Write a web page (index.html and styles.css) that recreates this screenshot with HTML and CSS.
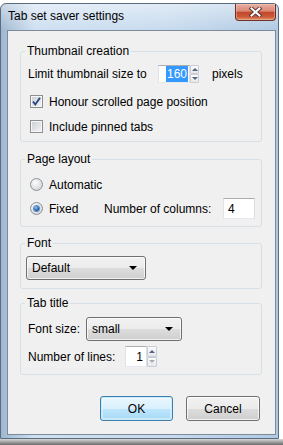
FILE: index.html
```html
<!DOCTYPE html>
<html lang="en">
<head>
  <meta charset="UTF-8">
  <title>Tab set saver settings</title>
  <link rel="stylesheet" href="styles.css">
</head>
<body>
  <div class="window">
    <div class="titlebar">
      <span class="title">Tab set saver settings</span>
      <span class="close">
        <svg width="13" height="10" viewBox="0 0 13 10">
          <path d="M2.5 1.5 L10.5 8.5 M10.5 1.5 L2.5 8.5" stroke="#5a3a36" stroke-width="4" stroke-linecap="square"/>
          <path d="M2.5 1.5 L10.5 8.5 M10.5 1.5 L2.5 8.5" stroke="#fff" stroke-width="2" stroke-linecap="square"/>
        </svg>
      </span>
    </div>

    <div class="client">
      <fieldset class="group thumb">
        <legend>Thumbnail creation</legend>
        <div class="row limit">
          <span class="limit-label">Limit thumbnail size to</span>
          <span class="spin">
            <span class="field size-field"><span class="selected">160</span></span>
            <span class="arrows">
              <span class="up"></span>
              <span class="down"></span>
            </span>
          </span>
          <span class="pixels">pixels</span>
        </div>
        <label class="row check-row honour">
          <span class="box">
            <svg width="11" height="11" viewBox="0 0 11 11">
              <path d="M2 5.5 L4.3 8.5 L9 1.8" fill="none" stroke="#2b4587" stroke-width="1.9"/>
            </svg>
          </span>
          Honour scrolled page position
        </label>
        <label class="row check-row pinned">
          <span class="box"></span>
          Include pinned tabs
        </label>
      </fieldset>

      <fieldset class="group layout">
        <legend>Page layout</legend>
        <label class="row check-row automatic">
          <span class="radio"></span>
          Automatic
        </label>
        <div class="row fixed">
          <span class="radio on"></span>
          <span class="fixed-label">Fixed</span>
          <span class="columns-label">Number of columns:</span>
          <span class="field columns-field">4</span>
        </div>
      </fieldset>

      <fieldset class="group font">
        <legend>Font</legend>
        <div class="combo font-combo">Default</div>
      </fieldset>

      <fieldset class="group tabtitle">
        <legend>Tab title</legend>
        <div class="row size-row">
          <span class="size-label">Font size:</span>
          <div class="combo size-combo">small</div>
        </div>
        <div class="row lines-row">
          <span class="lines-label">Number of lines:</span>
          <span class="spin small-spin">
            <span class="field lines-field">1</span>
            <span class="arrows">
              <span class="up"></span>
              <span class="down off"></span>
            </span>
          </span>
        </div>
      </fieldset>

      <div class="buttons">
        <span class="btn default">OK</span>
        <span class="btn cancel">Cancel</span>
      </div>
    </div>
  </div>
  <div class="under"></div>
</body>
</html>
```

FILE: styles.css
```css
* {
  box-sizing: border-box;
}
html, body {
  margin: 0;
  padding: 0;
}
body {
  width: 283px;
  height: 445px;
  overflow: hidden;
  background: #fff;
  font-family: "Liberation Sans", Arial, sans-serif;
  font-size: 12px;
  color: #000;
}
.window {
  margin-top: 3px;
  width: 279px;
  height: 436px;
  display: flex;
  flex-direction: column;
  border: 1px solid #5a6d80;
  border-radius: 6px 6px 0 0;
  background:
    linear-gradient(rgba(255,255,255,0.45), rgba(255,255,255,0) 26px),
    linear-gradient(to right, #9fb8d1, #cfe0f1 12%, #c8dbee 60%, #b0c9e3);
}
.titlebar {
  height: 26px;
  display: flex;
  justify-content: space-between;
  align-items: flex-start;
}
.title {
  padding: 5px 0 0 7px;
  line-height: 15px;
}
.close {
  width: 41px;
  height: 17px;
  margin-right: 2px;
  display: flex;
  align-items: center;
  justify-content: center;
  border: 1px solid #6d3026;
  border-top: none;
  border-radius: 0 0 4px 4px;
  background: linear-gradient(#eab0a3, #d98672 45%, #c4452c 52%, #cc5a38 80%, #e0936a);
  box-shadow: inset 0 0 0 1px rgba(255,220,210,0.35);
}
.client {
  flex: 1;
  margin: 0 2px 3px 6px;
  padding: 13px 0 0 12px;
  display: flex;
  flex-direction: column;
  align-items: flex-start;
  border: 1px solid #7d8b99;
  background: #f0f0f0;
}
.group {
  margin: 0;
  padding: 0;
  min-width: 0;
  width: 242px;
  border: 1px solid #d5dfe5;
  border-radius: 3px;
}
.group legend {
  margin-left: 4px;
  padding: 0 2px;
  line-height: 15px;
}
.row {
  display: flex;
  align-items: center;
  padding-left: 7px;
}
.field {
  display: flex;
  align-items: center;
  background: #fff;
  border: 1px solid;
  border-color: #abadb3 #dbdfe6 #e3e9ef #e2e3ea;
}
.spin {
  display: flex;
}
.arrows {
  display: flex;
  flex-direction: column;
}
.arrows span {
  flex: 1;
  display: flex;
  align-items: center;
  justify-content: center;
  border: 1px solid #c9ced6;
  border-radius: 1px;
  background: linear-gradient(#fbfbfb, #e8e8e8);
}
.arrows .up::after,
.arrows .down::after {
  content: "";
  border-left: 3px solid transparent;
  border-right: 3px solid transparent;
}
.arrows .up::after {
  border-bottom: 3px solid #52648c;
}
.arrows .down::after {
  border-top: 3px solid #52648c;
}
.arrows .down.off::after {
  border-top-color: #a8acb2;
}

/* thumbnail creation */
.limit {
  height: 20px;
  margin-top: 5px;
}
.limit-label {
  width: 130px;
}
.spin .size-field {
  width: 32px;
  justify-content: flex-end;
  padding-right: 1px;
}
.selected {
  background: #3399ff;
  color: #fff;
  line-height: 16px;
  padding: 0 1px;
}
.limit .arrows {
  width: 9px;
}
.pixels {
  margin-left: 13px;
}
.check-row {
  height: 13px;
  padding-left: 9px;
}
.honour {
  margin-top: 11px;
}
.pinned {
  margin-top: 12px;
  margin-bottom: 8px;
}
.box {
  width: 13px;
  height: 13px;
  margin-right: 6px;
  display: flex;
  align-items: center;
  justify-content: center;
  border: 1px solid #8f8f8f;
  background: linear-gradient(135deg, #c9ced5, #f5f6f7);
  box-shadow: inset 0 0 0 1px #f6f6f6;
}
.radio {
  width: 13px;
  height: 13px;
  margin-right: 6px;
  flex: none;
  display: flex;
  align-items: center;
  justify-content: center;
  border: 1px solid #8f9296;
  border-radius: 50%;
  background: radial-gradient(circle at 40% 35%, #fdfdfd, #d3d6da 80%);
}
.radio.on::after {
  content: "";
  width: 5px;
  height: 5px;
  border-radius: 50%;
  background: radial-gradient(circle at 40% 35%, #9fcaf2, #1c5aa6 60%, #0d3f7f);
  box-shadow: 0 0 0 1px #5d8fc6;
}

/* page layout */
.layout {
  margin-top: 10px;
}
.automatic {
  margin-top: 11px;
}
.fixed {
  height: 21px;
  margin-top: 7px;
  margin-bottom: 7px;
  padding-left: 9px;
}
.fixed-label {
  width: 55px;
}
.columns-label {
  width: 119px;
}
.columns-field {
  width: 32px;
  height: 21px;
  padding-left: 4px;
}

/* font */
.font {
  margin-top: 9px;
}
.combo {
  height: 24px;
  display: flex;
  align-items: center;
  padding-left: 5px;
  position: relative;
  border: 1px solid #707070;
  border-radius: 3px;
  background: linear-gradient(#f2f2f2, #ebebeb 50%, #dddddd 51%, #cfcfcf);
  box-shadow: inset 0 0 0 1px rgba(255,255,255,0.7);
}
.combo::after {
  content: "";
  position: absolute;
  right: 8px;
  top: 9px;
  border-left: 4px solid transparent;
  border-right: 4px solid transparent;
  border-top: 4px solid #000;
}
.font-combo {
  width: 120px;
  margin: 5px 0 8px 5px;
}

/* tab title */
.tabtitle {
  margin-top: 7px;
}
.size-row {
  margin-top: 6px;
}
.size-label {
  width: 58px;
}
.size-combo {
  width: 96px;
}
.lines-row {
  margin-top: 5px;
  margin-bottom: 7px;
}
.lines-label {
  width: 97px;
}
.small-spin {
  height: 21px;
}
.lines-field {
  width: 22px;
  justify-content: flex-end;
  padding-right: 3px;
}
.small-spin .arrows {
  width: 10px;
}

/* buttons */
.buttons {
  display: flex;
  gap: 13px;
  margin: 21px 0 0 80px;
}
.btn {
  height: 25px;
  display: flex;
  align-items: center;
  justify-content: center;
  border: 1px solid #707070;
  border-radius: 3px;
  background: linear-gradient(#f2f2f2, #ebebeb 50%, #dddddd 51%, #cfcfcf);
  box-shadow: inset 0 0 0 1px rgba(255,255,255,0.75);
}
.btn.default {
  width: 73px;
  border-color: #3c7fb1;
  background: linear-gradient(#eaf6fd, #d9f0fc 50%, #bee6fd 51%, #a7d9f5);
  box-shadow: inset 0 0 0 1px #c6e9fc, inset 0 0 0 2px rgba(255,255,255,0.4);
}
.btn.cancel {
  width: 74px;
}
.under {
  height: 6px;
  background: linear-gradient(#d8d8d8, #6a6a6a);
}
```
